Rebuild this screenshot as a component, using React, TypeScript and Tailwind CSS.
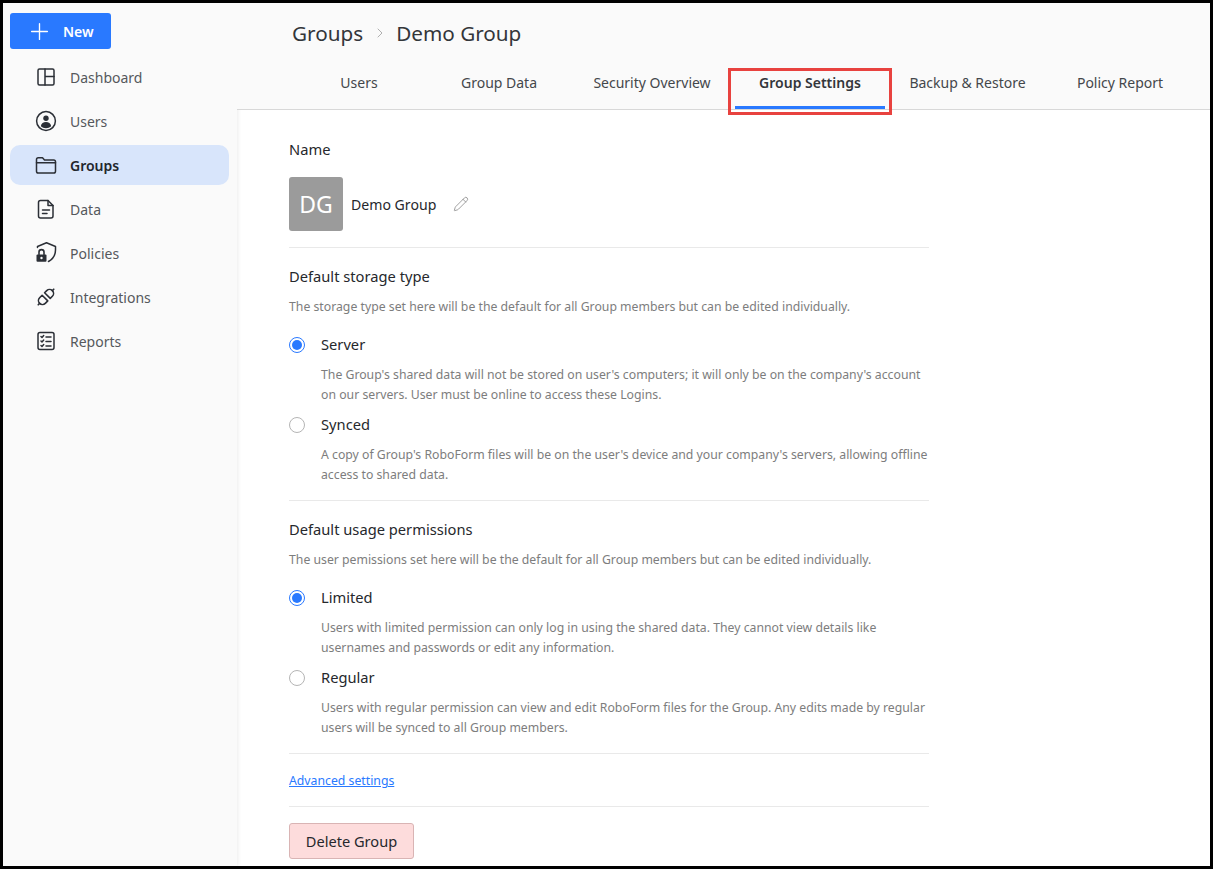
import { Plus, ChevronRight, Pencil } from 'lucide-react'
import type { ReactNode } from 'react'

const iconProps = {
  width: 24,
  height: 24,
  viewBox: '0 0 24 24',
  fill: 'none',
  stroke: '#2b2f36',
  strokeWidth: 1.5,
  strokeLinecap: 'round' as const,
  strokeLinejoin: 'round' as const,
}

const DashboardIcon = () => (
  <svg {...iconProps}>
    <rect x="4" y="4" width="16" height="16" rx="1.5" />
    <path d="M11 4v16M11 11.5h9" />
  </svg>
)

const UsersIcon = () => (
  <svg {...iconProps}>
    <circle cx="12" cy="12" r="9.4" />
    <circle cx="12" cy="9.3" r="2.7" fill="#2b2f36" stroke="none" />
    <path d="M6.8 17.2c.5-3 2.6-4.2 5.2-4.2s4.700 1.200 5.200 4.200c-1.400 1.300-3.200 2-5.200 2s-3.800-.7-5.200-2z" fill="#2b2f36" stroke="none" />
  </svg>
)

const FolderIcon = () => (
  <svg {...iconProps}>
    <path d="M2.500 8V6.500A1.800 1.800 0 0 1 4.300 4.700h4.200l2 2.300h9.200a1.800 1.800 0 0 1 1.800 1.800v9.400a1.800 1.800 0 0 1-1.800 1.800H4.300a1.800 1.800 0 0 1-1.800-1.800z" />
    <path d="M2.500 9.700h19" />
  </svg>
)

const DataIcon = () => (
  <svg {...iconProps}>
    <path d="M6.500 3.500h7.500l5 5v10.500a2 2 0 0 1-2 2H6.500a2 2 0 0 1-2-2V5.500a2 2 0 0 1 2-2z" />
    <path d="M14 3.500v5h5M8.500 13h7M8.500 16.500h4.500" />
  </svg>
)

const PoliciesIcon = () => (
  <svg {...iconProps}>
    <path d="M3.500 6.500V5.500L12.500 1.800L21.500 5.500V9c0 4.500-2.500 9-7 11.500" />
    <rect x="2.500" y="13.500" width="10" height="7.200" rx="1" fill="#2b2f36" stroke="none" />
    <path d="M5 13.500v-2.400a2.500 2.500 0 0 1 5 0v2.400" strokeWidth={1.6} />
    <circle cx="7.500" cy="17" r="1.200" fill="#fafafa" stroke="none" />
  </svg>
)

const IntegrationsIcon = () => (
  <svg {...iconProps} strokeWidth={1.6}>
    <g transform="rotate(-45 12 12)">
      <path d="M10.500 8H7a4 4 0 0 0 0 8h3.500z" />
      <path d="M14 8h3a4 4 0 0 1 0 8h-3z" />
      <path d="M1 12h2M21 12h2" />
    </g>
  </svg>
)

const ReportsIcon = () => (
  <svg {...iconProps}>
    <rect x="4" y="3.500" width="16" height="17" rx="2" />
    <path d="M7 7.500l1 1 1.700-2M7 12l1 1 1.700-2M7 16.500l1 1 1.700-2M12 8h5M12 12.500h5M12 17h5" />
  </svg>
)

const NAV_ITEMS = [
  { label: 'Dashboard', icon: <DashboardIcon /> },
  { label: 'Users', icon: <UsersIcon /> },
  { label: 'Groups', icon: <FolderIcon />, active: true },
  { label: 'Data', icon: <DataIcon /> },
  { label: 'Policies', icon: <PoliciesIcon /> },
  { label: 'Integrations', icon: <IntegrationsIcon /> },
  { label: 'Reports', icon: <ReportsIcon /> },
]

const TABS = [
  { label: 'Users', width: 'w-[140px]' },
  { label: 'Group Data', width: 'w-[140px]' },
  { label: 'Security Overview', width: 'w-[166px]' },
  { label: 'Group Settings', width: 'w-[150px]', active: true },
  { label: 'Backup & Restore', width: 'w-[165px]' },
  { label: 'Policy Report', width: 'w-[140px]' },
]

function Radio({ checked, label, children }: { checked?: boolean; label: string; children: ReactNode }) {
  return (
    <div>
      <div className="flex h-[20px] items-center">
        <span className={`flex h-4 w-4 items-center justify-center rounded-full border ${checked ? 'border-[#2979ff]' : 'border-[#b5b5b5]'}`}>
          {checked && <span className="h-2.5 w-2.5 rounded-full bg-[#2979ff]" />}
        </span>
        <span className="ml-4 pb-[2px] text-[14.7px] leading-[18px] text-[#26282c]">{label}</span>
      </div>
      <p className="ml-8 mt-[10px] w-[610px] text-[12.25px] leading-[20px] text-[#7d7d7d]">{children}</p>
    </div>
  )
}

export default function App() {
  return (
    <div className="flex h-[869px] w-[1213px] overflow-hidden border-[3px] border-black bg-white font-['Noto_Sans',sans-serif]">
      <aside className="h-full w-[234px] shrink-0 bg-[#fafafa] pl-[7px] pr-[8px] pt-[10px] shadow-[1px_0_4px_rgba(0,0,0,0.08)]">
        <button className="flex h-[36px] w-[101px] items-center rounded-[3px] bg-[#2979ff] pl-[16px] text-[14px] font-semibold text-white">
          <Plus size={27} strokeWidth={1.2} />
          <span className="ml-[10px]">New</span>
        </button>
        <nav className="mt-[8px] flex flex-col gap-[4px]">
          {NAV_ITEMS.map((item) => (
            <div
              key={item.label}
              className={`flex h-[40px] items-center rounded-[10px] pl-[24px] text-[14px] ${item.active ? 'bg-[#d8e5fb] font-semibold text-[#22262c]' : 'text-[#55585c]'}`}
            >
              {item.icon}
              <span className="ml-[12px]">{item.label}</span>
            </div>
          ))}
        </nav>
      </aside>

      <main className="relative min-w-0 flex-1">
        <header className="h-[107px] border-b border-[#d8d8d8] bg-[#fafafa] pl-[52px]">
          <div className="flex items-center pl-[3px] pt-[14px] text-[20.7px] leading-[32px] text-[#33363a]">
            <span>Groups</span>
            <ChevronRight size={16} strokeWidth={1} className="mx-[8.5px] text-[#8a8a8a]" />
            <span>Demo Group</span>
          </div>
          <div className="mt-[12px] flex">
            {TABS.map((tab) => (
              <div
                key={tab.label}
                className={`flex h-[48px] flex-col items-center pt-[12px] text-[14px] leading-[20px] ${tab.width} ${tab.active ? 'border-b-[3px] border-[#2979ff] font-semibold text-[#33363a]' : 'text-[#44474b]'}`}
              >
                {tab.label}
              </div>
            ))}
          </div>
        </header>

        <div className="pointer-events-none absolute left-[491px] top-[65px] h-[47px] w-[164px] border-[3px] border-[#e8423f]" />

        <section className="ml-[52px] w-[640px]">
          <div className="border-b border-[#e9e9e9] pb-[16px] pt-[29px]">
            <h2 className="text-[14.7px] leading-[20px] text-[#26282c]">Name</h2>
            <div className="mt-[18px] flex items-center">
              <div className="flex h-[54px] w-[54px] items-center justify-center rounded-[3px] bg-[#9b9b9b] text-[23px] text-white">DG</div>
              <span className="ml-[8px] pt-[2px] text-[14.1px] text-[#26282c]">Demo Group</span>
              <Pencil size={16} strokeWidth={1} className="ml-[17px] text-[#6f6f6f]" />
            </div>
          </div>

          <div className="border-b border-[#e9e9e9] pb-[15px] pt-[18px]">
            <h2 className="text-[14.7px] leading-[20px] text-[#26282c]">Default storage type</h2>
            <p className="mt-[11px] text-[12.25px] leading-[20px] text-[#7d7d7d]">The storage type set here will be the default for all Group members but can be edited individually.</p>
            <div className="mt-[18px] flex flex-col gap-[10px]">
              <Radio checked label="Server">
                The Group's shared data will not be stored on user's computers; it will only be on the company's account on our servers. User must be online to access these Logins.
              </Radio>
              <Radio label="Synced">
                A copy of Group's RoboForm files will be on the user's device and your company's servers, allowing offline access to shared data.
              </Radio>
            </div>
          </div>

          <div className="border-b border-[#e9e9e9] pb-[15px] pt-[18px]">
            <h2 className="text-[14.7px] leading-[20px] text-[#26282c]">Default usage permissions</h2>
            <p className="mt-[11px] text-[12.25px] leading-[20px] text-[#7d7d7d]">The user pemissions set here will be the default for all Group members but can be edited individually.</p>
            <div className="mt-[18px] flex flex-col gap-[10px]">
              <Radio checked label="Limited">
                Users with limited permission can only log in using the shared data. They cannot view details like usernames and passwords or edit any information.
              </Radio>
              <Radio label="Regular">
                Users with regular permission can view and edit RoboForm files for the Group. Any edits made by regular users will be synced to all Group members.
              </Radio>
            </div>
          </div>

          <div className="border-b border-[#e9e9e9] pb-[16px] pt-[18px]">
            <a className="block text-[12.25px] leading-[18px] text-[#2979ff] underline">Advanced settings</a>
          </div>

          <button className="mt-[16px] h-[36px] w-[125px] rounded-[3px] border border-[#d9b4b4] bg-[#fddcdc] pt-[2px] text-[14.6px] text-[#26282c]">Delete Group</button>
        </section>
      </main>
    </div>
  )
}
